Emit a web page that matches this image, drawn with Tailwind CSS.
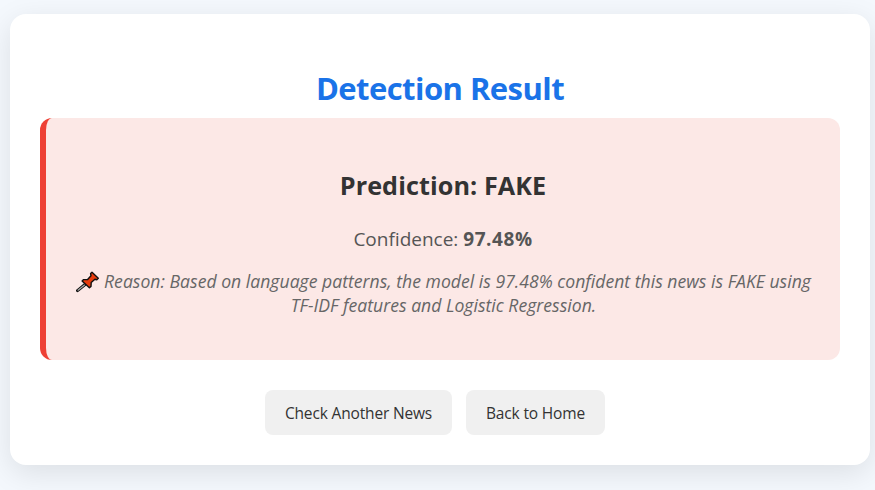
<!DOCTYPE html>
<html lang="en">
<head>
<meta charset="utf-8">
<title>Detection Result</title>
<script src="https://cdn.jsdelivr.net/npm/@tailwindcss/browser@4"></script>
</head>
<body class="h-[490px] overflow-hidden bg-[#f4f8fd] pl-[10px] pt-[14px] font-['Open_Sans','Noto_Sans',sans-serif]">
<main class="h-[451px] w-[860px] rounded-2xl bg-white px-[30px] pt-[52px] text-center shadow-[0_8px_30px_rgba(0,0,0,0.1)]">
  <h1 class="h-11 text-[31px] leading-[44px] font-bold tracking-[-0.55px] text-[#1a73e8]">Detection Result</h1>
  <section class="mt-2 h-[242px] rounded-xl border-l-6 border-[#ee4035] bg-[#fce8e6] pt-[50px]">
    <h2 class="text-[25.2px] leading-[34px] font-bold tracking-[0.08px] text-[#333]">Prediction: FAKE</h2>
    <p class="mt-6 text-[19px] leading-[26px] text-[#555]">Confidence: <strong class="font-bold tracking-[0.55px]">97.48%</strong></p>
    <p class="mt-[17px] pl-px text-[17.6px] leading-6 tracking-[0.01px] whitespace-nowrap text-[#666] italic"><svg class="mr-1 inline-block h-[23px] w-6 align-[-5px]" viewBox="0 0 24 23" fill="none" stroke="#111" stroke-linejoin="round" stroke-linecap="round"><path d="M9 14.5 1.5 20.6" stroke-width="3"/><path d="M8.5 15 2 20.2" stroke="#aaa" stroke-width="1.2"/><path d="M16 2.2 22.3 8.3 20.8 9.7 18.9 9.3 15.2 12.5 15 16.4 13.4 17.8 6.1 11 7.6 9.6 11.6 9.5 15 5.7 14.6 3.6Z" fill="#e83b0c" stroke-width="1.4"/></svg>Reason: Based on language patterns, the model is 97.48% confident this news is FAKE using<br>TF-IDF features and Logistic Regression.</p>
  </section>
  <nav class="mt-[30px] flex justify-center gap-[14px] pr-[10px] text-[15.5px] leading-[47px] tracking-[-0.16px] text-[#333]">
    <a class="h-[45px] w-[187px] rounded-lg bg-[#f0f0f0]">Check Another News</a>
    <a class="h-[45px] w-[139px] rounded-lg bg-[#f0f0f0]">Back to Home</a>
  </nav>
</main>
</body>
</html>
